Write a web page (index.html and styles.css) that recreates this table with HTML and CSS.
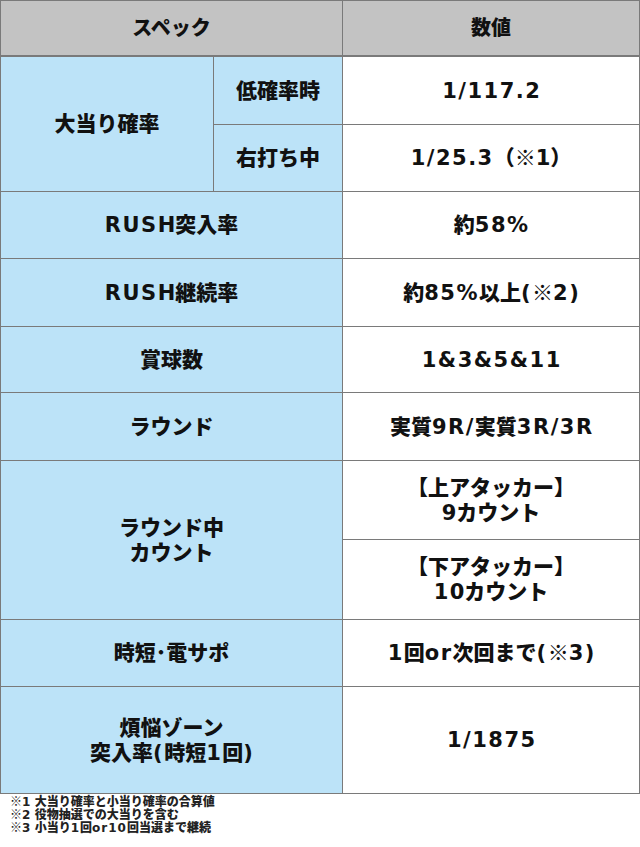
FILE: index.html
```html
<!DOCTYPE html>
<html lang="ja">
<head>
<meta charset="utf-8">
<title>スペック</title>
<link rel="stylesheet" href="styles.css">
</head>
<body>
<div class="spec">
  <div class="cell head span2"><span class="t">スペック</span></div>
  <div class="cell head"><span class="t">数値</span></div>

  <div class="cell label rows2"><span class="t">大当り確率</span></div>
  <div class="cell label"><span class="t">低確率時</span></div>
  <div class="cell val"><span class="t"><span class="en">1/117.2</span></span></div>
  <div class="cell label"><span class="t">右打ち中</span></div>
  <div class="cell val"><span class="t"><span class="en">1/25.3</span>（※<span class="en">1</span>）</span></div>

  <div class="cell label span2"><span class="t"><span class="en">RUSH</span>突入率</span></div>
  <div class="cell val"><span class="t">約<span class="en">58%</span></span></div>

  <div class="cell label span2"><span class="t"><span class="en">RUSH</span>継続率</span></div>
  <div class="cell val"><span class="t">約<span class="en">85%</span>以上<span class="en">(</span>※<span class="en">2)</span></span></div>

  <div class="cell label span2"><span class="t">賞球数</span></div>
  <div class="cell val"><span class="t"><span class="en">1&amp;3&amp;5&amp;11</span></span></div>

  <div class="cell label span2"><span class="t">ラウンド</span></div>
  <div class="cell val"><span class="t">実質<span class="en">9R/</span>実質<span class="en">3R/3R</span></span></div>

  <div class="cell label span2 rows2 two"><span class="t">ラウンド中<br>カウント</span></div>
  <div class="cell val two"><span class="t">【上アタッカー】<br><span class="en">9</span>カウント</span></div>
  <div class="cell val two"><span class="t">【下アタッカー】<br><span class="en">10</span>カウント</span></div>

  <div class="cell label span2"><span class="t">時短･電サポ</span></div>
  <div class="cell val"><span class="t"><span class="en">1</span>回<span class="en">or</span>次回まで<span class="en">(</span>※<span class="en">3)</span></span></div>

  <div class="cell label span2 two"><span class="t">煩悩ゾーン<br>突入率<span class="en">(</span>時短<span class="en">1</span>回<span class="en">)</span></span></div>
  <div class="cell val"><span class="t"><span class="en">1/1875</span></span></div>
</div>
<div class="notes">
  <p>※<span class="en">1</span> 大当り確率と小当り確率の合算値</p>
  <p>※<span class="en">2</span> 役物抽選での大当りを含む</p>
  <p>※<span class="en">3</span> 小当り<span class="en">1</span>回<span class="en">or10</span>回当選まで継続</p>
</div>
</body>
</html>
```

FILE: styles.css
```css
html, body {
  margin: 0;
  padding: 0;
  background: #ffffff;
}

body {
  width: 640px;
  font-family: "Liberation Sans", "Noto Sans CJK JP", sans-serif;
  font-weight: 900;
  color: #111111;
}

.spec {
  display: grid;
  grid-template-columns: 212px 128px 296px;
  grid-template-rows: 55px 67px 66px 66px 67px 65px 67px 78px 79px 66px 106px;
  gap: 1px;
  padding: 1px;
  background: #7a7a7a;
}

.cell {
  display: flex;
  align-items: center;
  justify-content: center;
  text-align: center;
  font-size: 21px;
  line-height: 26px;
}

.t {
  display: block;
  white-space: nowrap;
}

.head {
  background: #c3c3c3;
  border-bottom: 1px solid #7a7a7a;
  font-size: 20px;
}

.label {
  background: #bce3f8;
}

.val {
  background: #ffffff;
}

.span2 {
  grid-column: span 2;
}

.rows2 {
  grid-row: span 2;
}

.two {
  line-height: 25px;
}

.en {
  font-family: "DejaVu Sans", "Liberation Sans", sans-serif;
  font-weight: bold;
  font-size: 21px;
  letter-spacing: 1.5px;
}

.t > .en:last-child {
  margin-right: -1.5px;
}

.notes {
  padding: 2px 0 0 10px;
}

.notes p {
  margin: 0;
  font-size: 12px;
  line-height: 13px;
  color: #222222;
  white-space: nowrap;
}

.notes .en {
  font-size: 12px;
  letter-spacing: 1px;
}
```
